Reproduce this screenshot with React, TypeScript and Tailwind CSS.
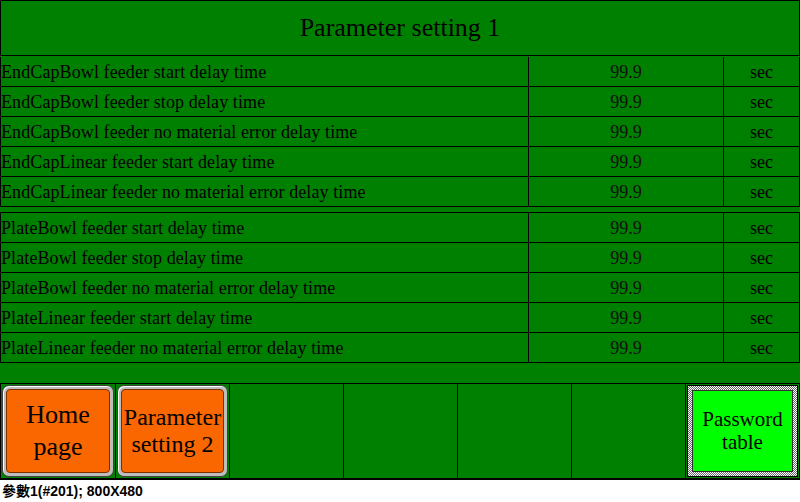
const groupA = [
  "EndCapBowl feeder start delay time",
  "EndCapBowl feeder stop delay time",
  "EndCapBowl feeder no material error delay time",
  "EndCapLinear feeder start delay time",
  "EndCapLinear feeder no material error delay time",
];

const groupB = [
  "PlateBowl feeder start delay time",
  "PlateBowl feeder stop delay time",
  "PlateBowl feeder no material error delay time",
  "PlateLinear feeder start delay time",
  "PlateLinear feeder no material error delay time",
];

function Row({ label }: { label: string }) {
  return (
    <div className="grid h-[30px] grid-cols-[527px_195px_1fr] border-x border-b border-black">
      <div className="flex items-center leading-none tracking-[0.1px]">{label}</div>
      <div className="flex items-center justify-center border-l border-black leading-none text-[#111]">
        99.9
      </div>
      <div className="flex items-center justify-center border-l border-black leading-none">sec</div>
    </div>
  );
}

function OrangeButton({ children, size }: { children: React.ReactNode; size: string }) {
  return (
    <div className="h-full p-px">
      <div className="h-full rounded-[7px] border border-[#404040] bg-[#bdbdbd] p-[3px] shadow-[inset_1px_1px_0_#ffffff]">
        <div
          className={`flex h-full flex-col items-center justify-center rounded-[4px] border border-[#7a3000] bg-[#fa6600] text-center ${size}`}
        >
          {children}
        </div>
      </div>
    </div>
  );
}

export default function App() {
  return (
    <div className="flex h-[502px] w-[800px] flex-col bg-white font-['Liberation_Serif',serif] text-black">
      <div className="flex h-[480px] flex-col bg-[#008000]">
        {/* title */}
        <div className="flex h-[56px] items-center justify-center border border-black text-[26px] leading-none">
          Parameter setting 1
        </div>

        <div className="pt-px text-[18px]">
          {groupA.map((l) => (
            <Row key={l} label={l} />
          ))}
        </div>

        <div className="mt-[5px] border-t border-black text-[18px]">
          {groupB.map((l) => (
            <Row key={l} label={l} />
          ))}
        </div>

        {/* bottom buttons */}
        <div className="mt-[20px] grid h-[97px] grid-cols-7 border-x border-y border-black border-b-2">
          <OrangeButton size="text-[26px] leading-[32px]">
            <span>Home</span>
            <span>page</span>
          </OrangeButton>
          <div className="border-l border-black">
            <OrangeButton size="text-[24px] leading-[27px]">
              <span>Parameter</span>
              <span>setting 2</span>
            </OrangeButton>
          </div>
          <div className="border-l border-black" />
          <div className="border-l border-black" />
          <div className="border-l border-black" />
          <div className="border-l border-black" />
          <div className="border-l border-black p-px">
            <div className="h-full border border-black bg-[repeating-conic-gradient(#6a6a6a_0_25%,#ffffff_0_50%)] bg-[length:2px_2px] p-[4px]">
              <div className="flex h-full flex-col items-center justify-center border border-[#303030] bg-[#00ff00] text-center text-[21px] leading-[23px]">
                <span>Password</span>
                <span>table</span>
              </div>
            </div>
          </div>
        </div>
      </div>

      <div className="flex h-[22px] items-center pl-[2px] font-['Liberation_Sans','Noto_Sans_CJK_TC',sans-serif] text-[14px] font-bold">
        參數1(#201); 800X480
      </div>
    </div>
  );
}
